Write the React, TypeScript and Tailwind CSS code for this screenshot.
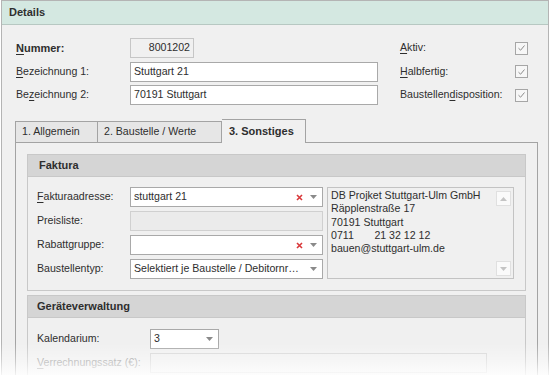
import React from "react";

const F = { fontFamily: '"Liberation Sans", Arial, sans-serif' };

function U({ children }: { children: React.ReactNode }) {
  return <span className="underline underline-offset-2">{children}</span>;
}

function Arrow() {
  return (
    <svg width="7" height="4" viewBox="0 0 7 4" className="shrink-0">
      <path d="M0 0 L7 0 L3.5 4 Z" fill="#8a8a8a" />
    </svg>
  );
}

function Clear() {
  return (
    <svg width="7" height="7" viewBox="0 0 7 7" className="shrink-0">
      <path d="M1 1 L6 6 M6 1 L1 6" stroke="#d9383a" strokeWidth="1.6" />
    </svg>
  );
}

function Check() {
  return (
    <div className="w-[13px] h-[13px] border border-[#a6a6a6] bg-[#f7f7f7] flex items-center justify-center">
      <svg width="9" height="8" viewBox="0 0 9 8">
        <path d="M1.5 4.2 L3.6 6.2 L7.5 1.5" stroke="#8c8c8c" strokeWidth="1" fill="none" />
      </svg>
    </div>
  );
}

function Combo({ value, clear, w }: { value: string; clear?: boolean; w: string }) {
  return (
    <div className={`${w} h-[20px] bg-white border border-[#a9a9a9] flex items-center pl-[3px] pr-[5px]`}>
      <span className="flex-1 whitespace-nowrap overflow-hidden">{value}</span>
      {clear && (
        <span className="mr-[7px] flex items-center">
          <Clear />
        </span>
      )}
      <Arrow />
    </div>
  );
}

export default function App() {
  return (
    <div className="w-[551px] h-[375px] bg-white relative overflow-hidden text-[10.6px] text-[#2e2e2e]" style={F}>
      <div className="ml-[1px] w-[548px] h-[380px] border border-[#b4b4b4] bg-[#f0f0f0] flex flex-col">
        {/* Header */}
        <div className="shrink-0 h-[24px] bg-[#d4e8e1] border-b border-[#b7c8c2] flex items-center pl-[7px] font-bold text-[11px] text-[#2f2f2f]">
          Details
        </div>

        {/* Top form */}
        <div className="shrink-0 flex pt-[13px] pl-[14px]">
          <div className="flex flex-col gap-[3.5px]">
            <div className="flex items-center h-[20px]">
              <span className="w-[114px] font-bold text-[11px]">
                <U>N</U>ummer:
              </span>
              <div className="w-[64px] h-[20px] border border-[#c6c6c6] bg-[#f0f0f0] flex items-center justify-end pr-[3px]">
                8001202
              </div>
            </div>
            <div className="flex items-center h-[20px]">
              <span className="w-[114px]">
                <U>B</U>ezeichnung 1:
              </span>
              <div className="w-[248px] h-[20px] border border-[#a9a9a9] bg-white flex items-center pl-[3px]">
                Stuttgart 21
              </div>
            </div>
            <div className="flex items-center h-[20px]">
              <span className="w-[114px]">
                Be<U>z</U>eichnung 2:
              </span>
              <div className="w-[248px] h-[20px] border border-[#a9a9a9] bg-white flex items-center pl-[3px]">
                70191 Stuttgart
              </div>
            </div>
          </div>
          <div className="flex flex-col gap-[3.5px] ml-[22px]">
            <div className="flex items-center h-[20px]">
              <span className="w-[115px]">
                <U>A</U>ktiv:
              </span>
              <Check />
            </div>
            <div className="flex items-center h-[20px]">
              <span className="w-[115px]">
                <U>H</U>albfertig:
              </span>
              <Check />
            </div>
            <div className="flex items-center h-[20px]">
              <span className="w-[115px] whitespace-nowrap">
                Baustellen<U>d</U>isposition:
              </span>
              <Check />
            </div>
          </div>
        </div>

        {/* Tabs */}
        <div className="shrink-0 ml-[13px] w-[523px] mt-[14px] flex items-end h-[23px]">
          <div className="w-[83px] h-[21px] border border-[#a3a3a3] border-b-0 bg-[#e6e6e6] flex items-center pl-[6px]">
            1. Allgemein
          </div>
          <div className="w-[124px] h-[21px] border border-[#a3a3a3] border-l-0 border-b-0 bg-[#e6e6e6] flex items-center pl-[6px]">
            2. Baustelle / Werte
          </div>
          <div className="w-[84px] h-[24px] border border-[#a3a3a3] border-l-0 border-b-0 bg-[#f0f0f0] flex items-center pl-[7px] font-bold text-[11px] relative z-10 -mb-[1px]">
            3. Sonstiges
          </div>
        </div>
        <div className="shrink-0 ml-[13px] w-[523px] h-[240px] border border-[#a3a3a3] border-b-0 bg-[#f0f0f0] px-[11px] pt-[11px]">
          {/* Faktura */}
          <div className="border border-[#c8c8c8]">
            <div className="h-[22px] bg-[#d5d5d5] border-b border-[#c8c8c8] flex items-center pl-[11px] font-bold text-[11px]">
              Faktura
            </div>
            <div className="flex pl-[9px] pt-[10px] pb-[11px]">
              <div className="flex flex-col gap-[4px]">
                <div className="flex items-center h-[20px]">
                  <span className="w-[93px]">
                    <U>F</U>akturaadresse:
                  </span>
                  <Combo value="stuttgart 21" clear w="w-[193px]" />
                </div>
                <div className="flex items-center h-[20px]">
                  <span className="w-[93px]">Preisliste:</span>
                  <div className="w-[193px] h-[20px] border border-[#d0d0d0] bg-[#ebebeb]" />
                </div>
                <div className="flex items-center h-[20px]">
                  <span className="w-[93px]">Rabattgruppe:</span>
                  <Combo value="" clear w="w-[193px]" />
                </div>
                <div className="flex items-center h-[20px]">
                  <span className="w-[93px]">Baustellentyp:</span>
                  <Combo value="Selektiert je Baustelle / Debitornr…" w="w-[193px]" />
                </div>
              </div>
              <div className="ml-[4px] w-[187px] h-[92px] border border-[#c3c3c3] bg-[#f0f0f0] flex pl-[3px] pt-[1px] leading-[13.3px]">
                <div className="flex-1 whitespace-pre">
                  {"DB Projket Stuttgart-Ulm GmbH\nRäpplenstraße 17\n70191 Stuttgart\n0711       21 32 12 12\nbauen@stuttgart-ulm.de"}
                </div>
                <div className="flex flex-col justify-between py-[2px] pr-[2px]">
                  <div className="w-[15px] h-[15px] bg-[#fafafa] border border-[#e0e0e0] flex items-center justify-center">
                    <svg width="7" height="4" viewBox="0 0 7 4">
                      <path d="M0 4 L7 4 L3.5 0 Z" fill="#c4c4c4" />
                    </svg>
                  </div>
                  <div className="w-[15px] h-[15px] bg-[#fafafa] border border-[#e0e0e0] flex items-center justify-center">
                    <svg width="7" height="4" viewBox="0 0 7 4">
                      <path d="M0 0 L7 0 L3.5 4 Z" fill="#c4c4c4" />
                    </svg>
                  </div>
                </div>
              </div>
            </div>
          </div>

          {/* Geräteverwaltung */}
          <div className="border border-[#c8c8c8] mt-[4px]">
            <div className="h-[22px] bg-[#d5d5d5] border-b border-[#c8c8c8] flex items-center pl-[9px] font-bold text-[11px]">
              Geräteverwaltung
            </div>
            <div className="flex flex-col gap-[4px] pl-[9px] pt-[11px] pb-[10px]">
              <div className="flex items-center h-[20px]">
                <span className="w-[113px]">Kalendarium:</span>
                <Combo value="3" w="w-[69px]" />
              </div>
              <div className="flex items-center h-[20px]">
                <span className="w-[113px] whitespace-nowrap text-[#9a9a9a]">
                  <U>V</U>errechnungssatz (€):
                </span>
                <div className="w-[337px] h-[20px] border border-[#d6d6d6] bg-[#f0f0f0]" />
              </div>
            </div>
          </div>
        </div>
      </div>
      {/* bottom fade */}
      <div className="absolute left-0 right-0 bottom-0 h-[32px] bg-gradient-to-b from-white/0 via-white/35 to-white/85 pointer-events-none" />
    </div>
  );
}
